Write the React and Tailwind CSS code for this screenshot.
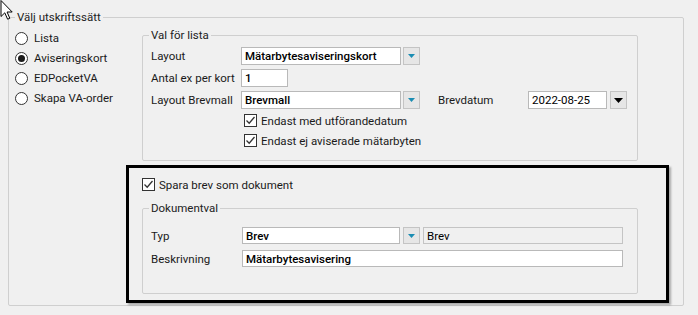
import React from "react";

const FONT = { fontFamily: "Roboto, 'Noto Sans', sans-serif" };

function Legend({ children }) {
  return (
    <span className="absolute left-[6px] -top-[8px] bg-[#f0f0f0] px-[2px] leading-[14px] text-[11.5px] text-[#222]">
      {children}
    </span>
  );
}

function Radio({ checked, label }) {
  return (
    <div className="flex h-[20px] items-center">
      <span className="flex h-[13px] w-[13px] items-center justify-center rounded-full border border-[#333] bg-white">
        {checked && <span className="h-[7px] w-[7px] rounded-full bg-[#1a1a1a]" />}
      </span>
      <span className="ml-[6px] text-[11.5px] leading-[14px] text-[#1a1a1a]">{label}</span>
    </div>
  );
}

function Check({ label }) {
  return (
    <div className="flex h-[13px] items-center">
      <span className="flex h-[13px] w-[13px] items-center justify-center border border-[#333] bg-white">
        <svg width="11" height="11" viewBox="0 0 11 11">
          <path d="M1.5 5.5 L4.2 8.2 L9.5 2" fill="none" stroke="#333" strokeWidth="1.3" />
        </svg>
      </span>
      <span className="ml-[4px] text-[11.5px] leading-[14px] text-[#1a1a1a]">{label}</span>
    </div>
  );
}

function DropBtn({ dark, h = "h-[18px]", className = "" }) {
  return (
    <span className={`flex ${h} w-[17px] shrink-0 items-center justify-center border border-[#c4c4c4] bg-[#e6e6e6] ${className}`}>
      {dark ? (
        <svg width="9" height="5" viewBox="0 0 9 5">
          <polygon points="0,0 9,0 4.5,5" fill="#000" />
        </svg>
      ) : (
        <svg width="7" height="4" viewBox="0 0 7 4">
          <polygon points="0,0 7,0 3.5,4" fill="#1b8db3" />
        </svg>
      )}
    </span>
  );
}

function Input({ w, h = "h-[18px]", value, bold = true, readOnly, className = "" }) {
  return (
    <span
      className={`flex ${w} ${h} shrink-0 items-center border ${
        readOnly ? "border-[#c4c4c4] bg-[#f0f0f0]" : "border-[#b9b9b9] bg-white"
      } pl-[3px] text-[11.5px] leading-[14px] text-black ${bold && !readOnly ? "font-medium" : ""} ${className}`}
    >
      {value}
    </span>
  );
}

function Label({ w, children, className = "" }) {
  return <span className={`${w} shrink-0 text-[11.5px] leading-[14px] text-[#1a1a1a] ${className}`}>{children}</span>;
}

export default function App() {
  return (
    <div className="relative h-[315px] w-[698px] overflow-hidden bg-[#f0f0f0]" style={FONT}>
      <div className="pl-[8px] pt-[17px]">
        <div className="relative h-[289px] w-[676px] rounded-[2px] border border-[#cfcfcf]">
          <Legend>Välj utskriftssätt</Legend>
          <div className="flex">
            <div className="w-[133px] pl-[6px] pt-[10px]">
              <Radio label="Lista" />
              <Radio checked label="Aviseringskort" />
              <Radio label="EDPocketVA" />
              <Radio label="Skapa VA-order" />
            </div>
            <div className="pt-[17px]">
              <div className="relative h-[126px] w-[496px] rounded-[2px] border border-[#cfcfcf]">
                <Legend>Val för lista</Legend>
                <div className="flex flex-col gap-[4px] pl-[8px] pt-[11px]">
                  <div className="flex items-center">
                    <Label w="w-[90px]">Layout</Label>
                    <Input w="w-[160px]" value="Mätarbytesaviseringskort" />
                    <DropBtn className="ml-[2px]" />
                  </div>
                  <div className="flex items-center">
                    <Label w="w-[90px]">Antal ex per kort</Label>
                    <Input w="w-[47px]" value="1" />
                  </div>
                  <div className="flex items-center">
                    <Label w="w-[90px]">Layout Brevmall</Label>
                    <Input w="w-[160px]" value="Brevmall" />
                    <DropBtn className="ml-[2px]" />
                    <Label w="w-[90px]" className="ml-[18px]">Brevdatum</Label>
                    <Input w="w-[79px]" value="2022-08-25" bold={false} />
                    <DropBtn dark className="ml-[3px]" />
                  </div>
                  <div className="ml-[93px] mt-[1px] flex flex-col gap-[7px]">
                    <Check label="Endast med utförandedatum" />
                    <Check label="Endast ej aviserade mätarbyten" />
                  </div>
                </div>
              </div>
            </div>
          </div>
          <div className="ml-[117px] mt-[4px] h-[138px] w-[543px] border-[3px] border-black pl-[13px] pt-[10px] shadow-[2px_2px_2px_rgba(0,0,0,0.3)]">
            <Check label="Spara brev som dokument" />
            <div className="relative mt-[17px] h-[86px] w-[496px] rounded-[2px] border border-[#cfcfcf]">
              <Legend>Dokumentval</Legend>
              <div className="flex flex-col gap-[6px] pl-[8px] pt-[18px]">
                <div className="flex items-center">
                  <Label w="w-[91px]">Typ</Label>
                  <Input w="w-[158px]" h="h-[17px]" value="Brev" />
                  <DropBtn h="h-[17px]" className="ml-[3px]" />
                  <Input w="w-[200px]" h="h-[17px]" value="Brev" readOnly className="ml-[3px]" />
                </div>
                <div className="flex items-center">
                  <Label w="w-[91px]">Beskrivning</Label>
                  <Input w="w-[381px]" h="h-[17px]" value="Mätarbytesavisering" />
                </div>
              </div>
            </div>
          </div>
        </div>
      </div>
      <svg className="absolute left-0 top-0" width="14" height="21" viewBox="0 0 14 21">
        <path d="M1 0.5 L1 16.5 L4.8 12.8 L7.6 19.2 L9.8 18.3 L7.1 12 L12.2 12 Z" fill="#fff" stroke="#000" strokeWidth="1" strokeLinejoin="miter" />
      </svg>
    </div>
  );
}
